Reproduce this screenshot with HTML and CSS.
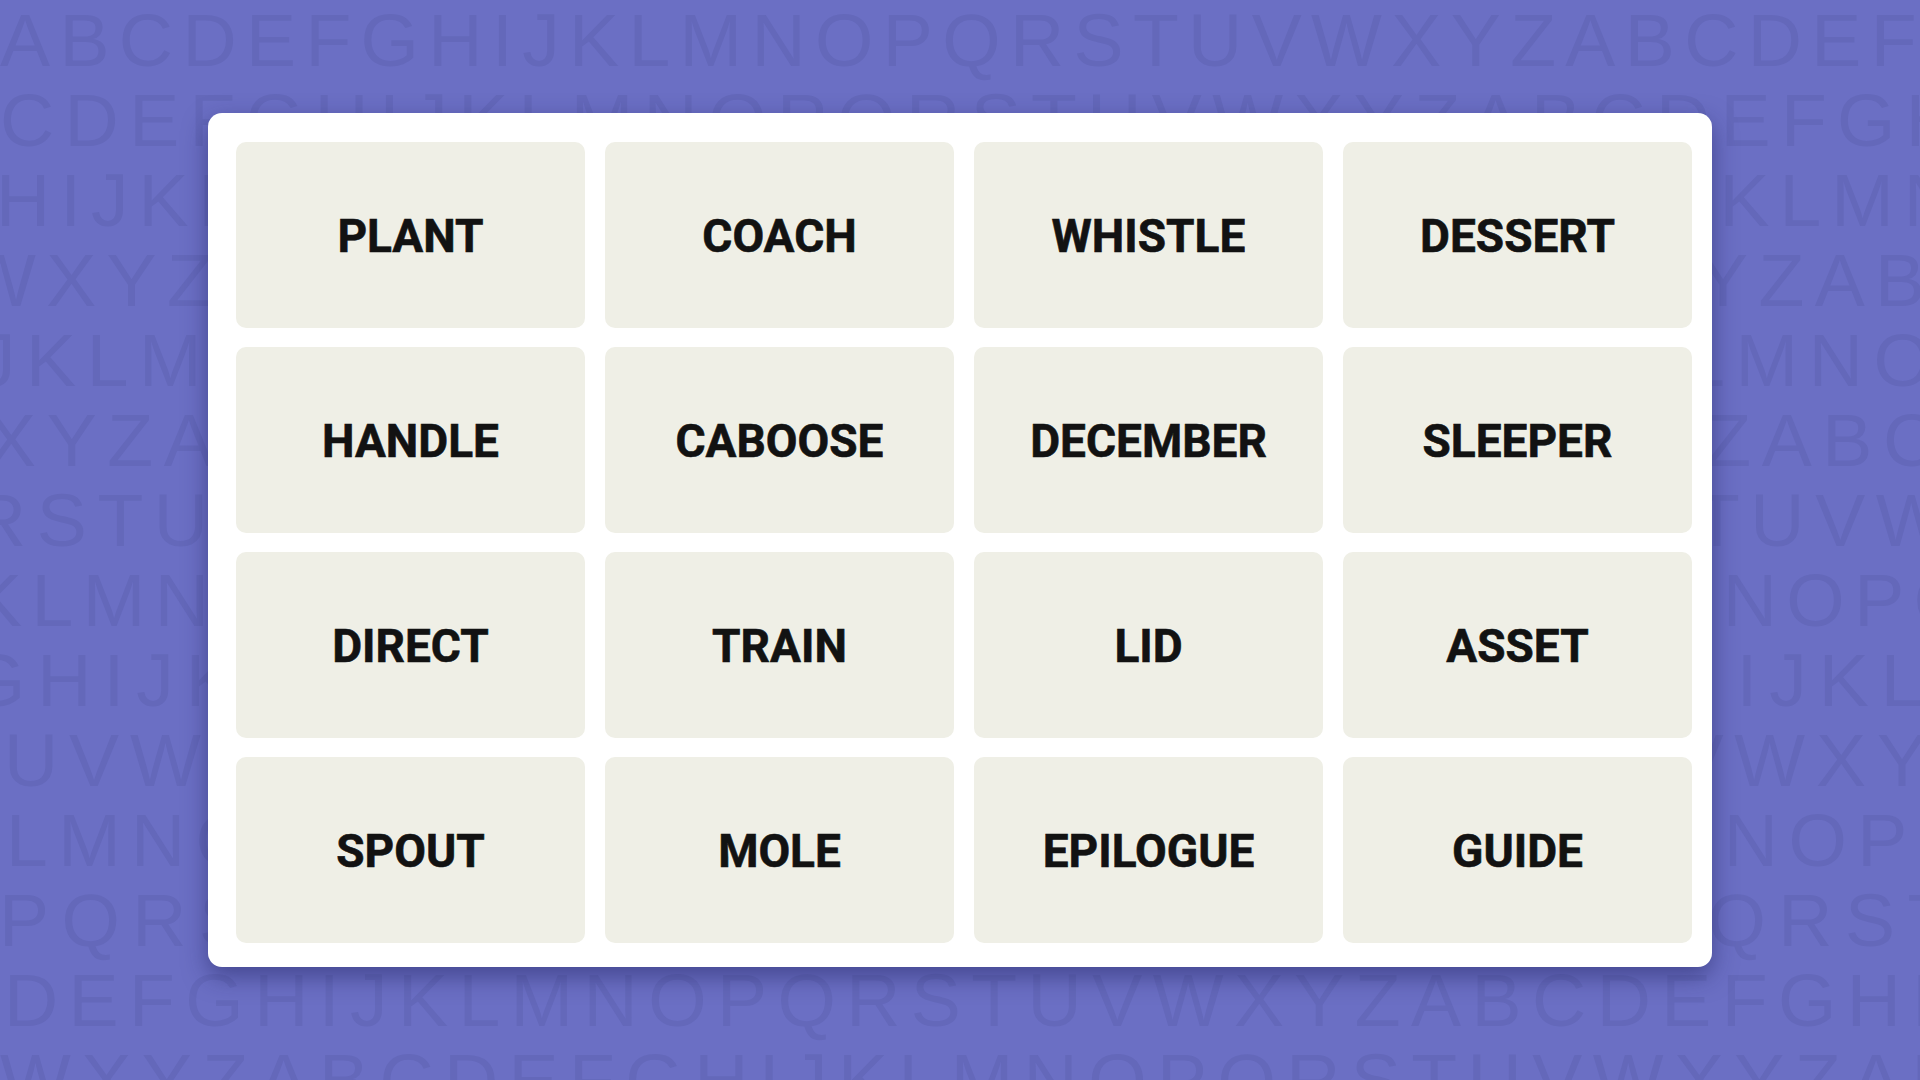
FILE: index.html
```html
<!DOCTYPE html>
<html lang="en">
<head>
<meta charset="utf-8">
<title>Connections</title>
<link rel="stylesheet" href="styles.css">
</head>
<body>
  <div class="letters" aria-hidden="true">
    <div class="row r1">ABCDEFGHIJKLMNOPQRSTUVWXYZABCDEFGH</div>
    <div class="row r2">CDEFGHIJKLMNOPQRSTUVWXYZABCDEFGHIJ</div>
    <div class="row r3">HIJKL<span class="under">MNOPQRSTUVWXYZABCDEFGHI</span>JKLMNO</div>
    <div class="row r4">WXYZA<span class="under">BCDEFGHIJKLMNOPQRSTUVWX</span>YZABCD</div>
    <div class="row r5">JKLMN<span class="under">OPQRSTUVWXYZABCDEFGHIJK</span>LMNOPQ</div>
    <div class="row r6">XYZAB<span class="under">CDEFGHIJKLMNOPQRSTUVWX</span>YZABCDE</div>
    <div class="row r7">RSTUV<span class="under">WXYZABCDEFGHIJKLMNOPQRS</span>TUVWXY</div>
    <div class="row r8">KLMNO<span class="under">PQRSTUVWXYZABCDEFGHIJKL</span>MNOPQR</div>
    <div class="row r9">GHIJK<span class="under">LMNOPQRSTUVWXYZABCDEFGH</span>IJKLMN</div>
    <div class="row r10">UVWX<span class="under">YZABCDEFGHIJKLMNOPQRSTU</span>VWXYZAB</div>
    <div class="row r11">LMNO<span class="under">PQRSTUVWXYZABCDEFGHIJKL</span>MNOPQRS</div>
    <div class="row r12">PQRS<span class="under">TUVWXYZABCDEFGHIJKLMNOP</span>QRSTUVW</div>
    <div class="row r13">DEFGHIJKLMNOPQRSTUVWXYZABCDEFGHIJK</div>
    <div class="row r14">WXYZABCDEFGHIJKLMNOPQRSTUVWXYZABCD</div>
  </div>

  <main class="stage">
    <section class="board">
      <div class="tile">PLANT</div>
      <div class="tile">COACH</div>
      <div class="tile">WHISTLE</div>
      <div class="tile">DESSERT</div>
      <div class="tile">HANDLE</div>
      <div class="tile">CABOOSE</div>
      <div class="tile">DECEMBER</div>
      <div class="tile">SLEEPER</div>
      <div class="tile">DIRECT</div>
      <div class="tile">TRAIN</div>
      <div class="tile">LID</div>
      <div class="tile">ASSET</div>
      <div class="tile">SPOUT</div>
      <div class="tile">MOLE</div>
      <div class="tile">EPILOGUE</div>
      <div class="tile">GUIDE</div>
    </section>
  </main>
</body>
</html>
```
FILE: styles.css
```css
html, body {
  margin: 0;
  padding: 0;
}

body {
  width: 1920px;
  height: 1080px;
  overflow: hidden;
  position: relative;
  background: #6b6fc4;
  font-family: "Liberation Sans", Arial, sans-serif;
}

/* decorative alphabet wallpaper behind the board */
.letters {
  position: absolute;
  inset: 0;
  overflow: hidden;
  z-index: 0;
}

.row {
  height: 80px;
  line-height: 80px;
  font-size: 75px;
  white-space: nowrap;
  color: #6468ba;
}

/* the stretch of each line that sits behind the board is never seen */
.under {
  visibility: hidden;
}

/* every line is justified a little differently */
.r1  { text-indent: 0;       letter-spacing: 9.4px; }
.r2  { text-indent: 0;       letter-spacing: 10.4px; }
.r3  { text-indent: -4px;    letter-spacing: 10px; }
.r4  { text-indent: -35px;   letter-spacing: 10.4px; }
.r5  { text-indent: -22px;   letter-spacing: 10.6px; }
.r6  { text-indent: -14px;   letter-spacing: 10.65px; }
.r7  { text-indent: -28px;   letter-spacing: 10.6px; }
.r8  { text-indent: -28px;   letter-spacing: 9.5px; }
.r9  { text-indent: -33px;   letter-spacing: 12px; }
.r10 { text-indent: 4px;     letter-spacing: 10.9px; }
.r11 { text-indent: 6px;     letter-spacing: 10.45px; }
.r12 { text-indent: -1px;    letter-spacing: 12.5px; }
.r13 { text-indent: 4px;     letter-spacing: 10.45px; }
.r14 { text-indent: 0;       letter-spacing: 10.45px; }

.stage {
  position: relative;
  z-index: 1;
  height: 1080px;
  display: flex;
  align-items: center;
  justify-content: center;
}

.board {
  box-sizing: border-box;
  width: 1504px;
  height: 854px;
  padding: 29px 20px 24px 28px;
  background: #ffffff;
  border-radius: 14px;
  box-shadow: 0 9px 24px rgba(28, 30, 90, 0.5);
  display: grid;
  grid-template-columns: repeat(4, 1fr);
  grid-template-rows: repeat(4, 1fr);
  column-gap: 20px;
  row-gap: 19px;
}

.tile {
  background: #efefe6;
  border-radius: 10px;
  display: flex;
  align-items: center;
  justify-content: center;
  padding-top: 1px;
  font-family: "Roboto", "Liberation Sans", sans-serif;
  font-weight: 700;
  font-size: 46px;
  color: #121212;
  letter-spacing: 0;
  -webkit-text-stroke: 0.6px #121212;
}
```
